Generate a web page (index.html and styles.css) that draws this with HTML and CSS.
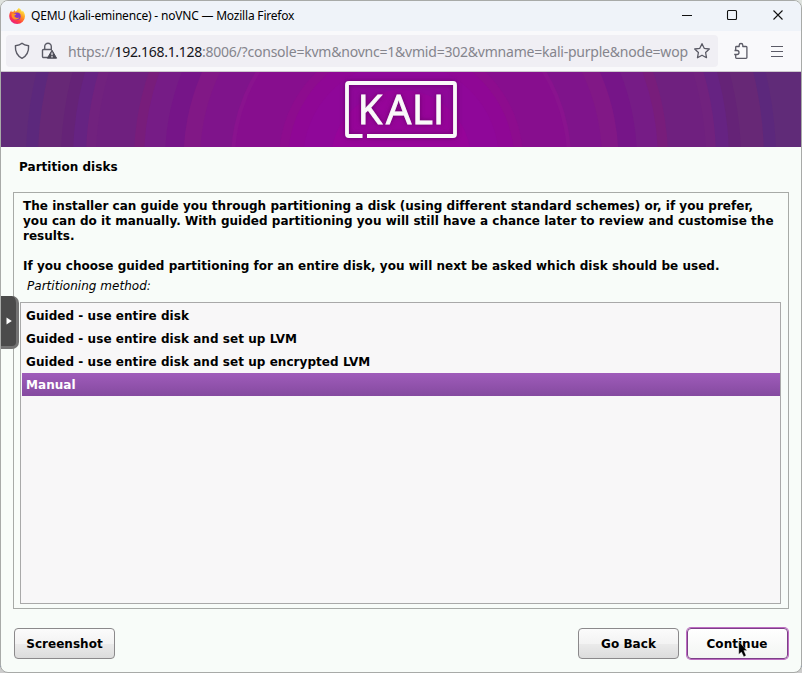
FILE: index.html
```html
<!DOCTYPE html>
<html lang="en">
<head>
<meta charset="utf-8">
<title>QEMU (kali-eminence) - noVNC — Mozilla Firefox</title>
<link rel="stylesheet" href="styles.css">
</head>
<body>
<div class="window">
  <header class="titlebar">
    <svg class="firefox" width="16" height="16" viewBox="0 0 16 16">
      <defs>
        <linearGradient id="flame" x1="0.9" y1="0" x2="0.2" y2="1"><stop offset="0.1" stop-color="#fff04a"/><stop offset="0.4" stop-color="#ff9a22"/><stop offset="0.7" stop-color="#ff4040"/><stop offset="1" stop-color="#e8178c"/></linearGradient>
      </defs>
      <path fill="url(#flame)" d="M9.8 0C12 1 12.6 3 13 3.8c.5-.2.6-.7.5-1.2C15.200 4.300 16 6.400 16 8.300A7.900 7.700 0 0 1 .2 8.300C.2 6 1 4 2.300 2.500l.3 1.500c.6-.3 1.200-.3 1.700-.2L5.900 2l.3 1.600C7.800 3.500 8 1.400 9.800 0Z"/>
      <circle cx="8" cy="8.300" r="3.700" fill="#8a35c9"/>
      <path fill="#ff9524" d="M2.800 5.300c2 .2 2.800.6 4.500.7-.2 1-1.500 1.200-2 1.800.5 2 3 2.700 5 1.700-1 2.300-4.800 2.900-6.600.8C2.500 9 2.300 7 2.800 5.300Z"/>
    </svg>
    <span class="title">QEMU (kali-eminence) - noVNC — Mozilla Firefox</span>
    <svg class="controls" width="104" height="12" viewBox="0 0 104 12" fill="none" stroke="#111" stroke-width="1.100">
      <path d="M1 6.500h10"/><rect x="46.500" y="1.500" width="9" height="9" rx="1"/><path d="M92.500 1.500l9 9M101.500 1.500l-9 9"/>
    </svg>
  </header>
  <div class="toolbar">
    <div class="urlbar">
      <svg class="shield" width="16" height="18" viewBox="0 0 16 18" fill="none" stroke="#5b5b66" stroke-width="1.400" stroke-linejoin="round"><path d="M8 1.300C6.500 2.700 4 3.500 1.400 3.700C1.100 9.500 3 13.700 8 16.300C13 13.700 14.900 9.500 14.600 3.700C12 3.500 9.500 2.700 8 1.300Z"/></svg>
      <svg class="lock" width="17" height="18" viewBox="0 0 17 18" fill="none" stroke="#5b5b66" stroke-width="1.400"><path d="M3.700 7.500V4.800a3.300 3.500 0 0 1 6.600 0v2.700M7 15.500H2.500a1 1 0 0 1-1-1V8.500a1 1 0 0 1 1-1h8.500"/><path d="M11 8.200L15.600 16.200H6.400Z" fill="#4b4b55" stroke="#4b4b55" stroke-width="1" stroke-linejoin="round"/><path d="M11 10.500v2.700M11 14.100v1.300" stroke="#f0eff4" stroke-width="1.200"/></svg>
      <span class="url">https://<b>192.168.1.128</b>:8006/?console=kvm&amp;novnc=1&amp;vmid=302&amp;vmname=kali-purple&amp;node=wop</span>
      <svg class="star" width="18" height="18" viewBox="0 0 18 18" fill="none" stroke="#5b5b66" stroke-width="1.300" stroke-linejoin="round"><path d="M9 1.700L11.200 6.300L16.300 7L12.600 10.500L13.500 15.700L9 13.200L4.500 15.700L5.400 10.500L1.700 7L6.800 6.300Z"/></svg>
    </div>
    <svg class="ext" width="16" height="18" viewBox="0 0 16 18" fill="none" stroke="#5b5b66" stroke-width="1.300" stroke-linejoin="round"><path d="M2.700 8V5.200a.7.700 0 0 1 .7-.7H6.200V3.300a1.800 1.800 0 0 1 3.600 0V4.500h3.300a.8.800 0 0 1 .8.800V15.500a.8.800 0 0 1-.8.800H3.500a.8.800 0 0 1-.8-.8V12.500H4a2 2 0 0 0 0-4H1.500M2.700 12.500H1.200"/></svg>
    <svg class="menu" width="12" height="11" viewBox="0 0 12 11" stroke="#5b5b66" stroke-width="1.200"><path d="M0 .5h12M0 5.500h12M0 10.500h12"/></svg>
  </div>
  <div class="banner">
    <svg width="800" height="75" viewBox="1 72 800 75">
      <defs><filter id="glow" x="-20%" y="-20%" width="140%" height="140%"><feDropShadow dx="0" dy="0" stdDeviation="2.500" flood-color="#500050" flood-opacity=".65"/></filter></defs>
      <rect x="1" y="72" width="800" height="75" fill="#602b78"/>
      <g>
        <circle cx="401" cy="160" r="375" fill="#5c287c"/>
        <circle cx="401" cy="160" r="363" fill="#672876"/>
        <circle cx="401" cy="160" r="340" fill="#652377"/>
        <circle cx="401" cy="160" r="328" fill="#662382"/>
        <circle cx="401" cy="160" r="315" fill="#71227e"/>
        <circle cx="401" cy="160" r="305" fill="#6f207f"/>
        <circle cx="401" cy="160" r="267" fill="#781d7b"/>
        <circle cx="401" cy="160" r="257" fill="#761c86"/>
        <circle cx="401" cy="160" r="236" fill="#761588"/>
        <circle cx="401" cy="160" r="217.500" fill="#811886"/>
        <circle cx="401" cy="160" r="201" fill="#7f148b"/>
        <circle cx="401" cy="160" r="170" fill="#89138e"/>
        <circle cx="401" cy="160" r="166" fill="#870e8e"/>
        <circle cx="401" cy="160" r="122" fill="#8d0c8e"/>
        <circle cx="401" cy="160" r="113" fill="#8f0795"/>
        <circle cx="401" cy="160" r="98" fill="#8f0799"/>
        <circle cx="401" cy="160" r="70" fill="#960499"/>
      </g>
      <g filter="url(#glow)">
        <path d="M362.500 136H349a2 2 0 0 1-2-2V85a2 2 0 0 1 2-2H453a2 2 0 0 1 2 2V134a2 2 0 0 1-2 2H367" fill="none" stroke="#fafafa" stroke-width="3.800"/>
        <text class="logo" x="357.700 386 412 433" y="124">KALI</text>
      </g>
    </svg>
  </div>
  <main class="installer">
    <h1>Partition disks</h1>
    <section class="panel">
      <p>The installer can guide you through partitioning a disk (using different standard schemes) or, if you prefer,<br>you can do it manually. With guided partitioning you will still have a chance later to review and customise the<br>results.<br><br>If you choose guided partitioning for an entire disk, you will next be asked which disk should be used.</p>
      <div class="label">Partitioning method:</div>
      <ul class="list">
        <li>Guided - use entire disk</li>
        <li>Guided - use entire disk and set up LVM</li>
        <li>Guided - use entire disk and set up encrypted LVM</li>
        <li class="selected">Manual</li>
      </ul>
    </section>
    <footer class="actions">
      <button>Screenshot</button>
      <span class="spacer"></span>
      <button>Go Back</button>
      <button class="primary">Continue</button>
    </footer>
  </main>
</div>
<div class="handle"><svg width="6" height="8" viewBox="0 0 6 8"><path d="M.5 .5L5.800 4L.5 7.500Z" fill="#fff"/></svg></div>
<svg class="cursor" width="10" height="17" viewBox="0 0 10 17"><path d="M.8.5L9 9.500H5.800L8 14.500L5.800 15.700L3.500 11L.8 13.200Z" fill="#000" stroke="#fff" stroke-width=".3"/></svg>
</body>
</html>
```
FILE: styles.css
```css
* { box-sizing: border-box; }
body {
  margin: 0;
  width: 802px;
  height: 673px;
  overflow: hidden;
  background: linear-gradient(#dfe3df 0 150px, #a9a5a9 150px 224px, #387a98 224px 300px, #999 300px 645px, #4468ae 645px 667px, #ccc 667px);
}
.window {
  height: 673px;
  display: flex;
  flex-direction: column;
  border: 1px solid #a8aaa8;
  border-radius: 8px;
  overflow: hidden;
  background: #f8fcf9;
}
.titlebar {
  flex: none;
  height: 30px;
  display: flex;
  align-items: center;
  padding: 0 16px 0 8px;
  background: #eff3f9;
  font: 12px "Noto Sans", sans-serif;
  color: #000;
}
.title { margin: -1px 0 0 6px; letter-spacing: -.2px; white-space: nowrap; }
.controls { margin: -2px 0 0 auto; }
.toolbar {
  flex: none;
  height: 41px;
  display: flex;
  align-items: center;
  padding: 0 18px 0 5px;
  background: #f9f9fb;
  border-bottom: 1px solid #ccc9cd;
}
.urlbar {
  width: 712px;
  height: 32px;
  display: flex;
  align-items: center;
  padding: 0 7px 0 8px;
  border-radius: 4px;
  background: #f0eff4;
}
.shield, .lock, .star, .ext, .menu, .firefox { flex: none; }
.lock { margin-left: 11px; }
.url {
  width: 621px;
  margin-left: 10px;
  white-space: nowrap;
  font: 14px "Noto Sans", sans-serif;
  letter-spacing: -.22px;
  color: #85858d;
}
.url b { font-weight: 400; color: #15141a; letter-spacing: -.3px; }
.star { margin-left: 5px; }
.ext { margin-left: 15px; }
.menu { margin-left: auto; }
.banner { flex: none; height: 75px; }
.banner svg { display: block; }
.logo { font: 400 40px "Open Sans", sans-serif; fill: #fafafa; stroke: #fafafa; stroke-width: .9px; }
.installer {
  flex: 1;
  padding: 13px 12px 0;
  font: bold 12px/15px "DejaVu Sans", sans-serif;
  letter-spacing: .03px;
  color: #000;
}
h1 { margin: 0 0 17px 6px; font: inherit; }
.panel {
  height: 417px;
  border: 1px solid #a7aaa7;
  padding: 6px 7px 4px 6px;
}
.panel p { margin: 0 0 5px 3px; white-space: nowrap; }
.label { margin: 0 0 8px 7px; font-weight: normal; font-style: italic; }
.list {
  height: 302px;
  margin: 0;
  padding: 1px 0 0 1px;
  border: 1px solid #a9a9a9;
  background: #f8f7f8;
  list-style: none;
  letter-spacing: .05px;
}
.list li { height: 23px; padding: 1px 0 0 4px; line-height: 23px; }
.list .selected { color: #fff; background: linear-gradient(#9f5cba, #854aa0); }
.actions { display: flex; gap: 8px; margin: 18px 0 0; padding: 0 0 0 1px; }
.spacer { flex: 1; }
button {
  width: 101px;
  height: 31px;
  margin-top: 1px;
  padding: 2px 0 0;
  border: 1px solid #8b898b;
  border-radius: 4px;
  background: linear-gradient(#fbfbfb, #f3f3f3 50%, #ebebeb 50%, #dcdcdc);
  font: inherit;
  letter-spacing: inherit;
  color: #000;
}
.actions .primary {
  width: 101px;
  margin-right: 1px;
  padding-right: 1px;
  border-color: #7d3f88;
  background: linear-gradient(#fff, #f3f5f3);
  box-shadow: 0 0 0 1px #bd6cc2;
}
.handle {
  position: absolute;
  left: 1px;
  top: 296px;
  width: 18px;
  height: 53px;
  padding: 21px 0 0 5px;
  border-radius: 0 7px 7px 0;
  background: #4b4b4b;
  border: solid #747474;
  border-width: 0 3px 3px 0;
}
.handle svg { display: block; }
.cursor { position: absolute; left: 738px; top: 641px; }
```
